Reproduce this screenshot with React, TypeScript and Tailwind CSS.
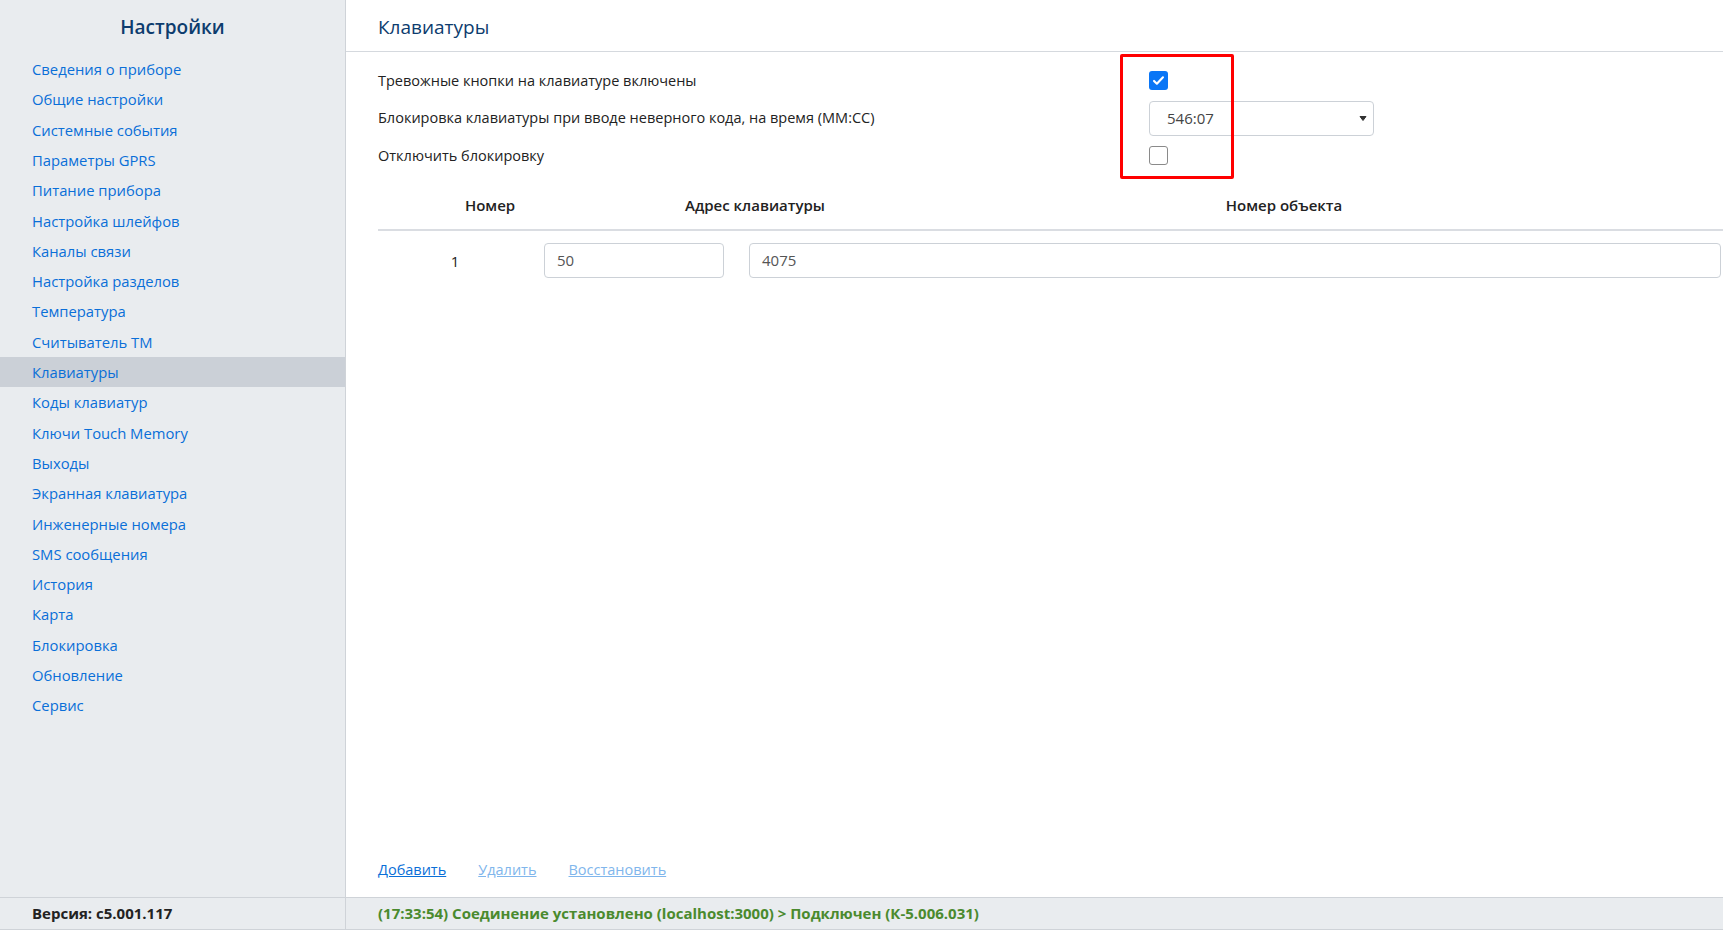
import React from "react";

const menu = [
  "Сведения о приборе",
  "Общие настройки",
  "Системные события",
  "Параметры GPRS",
  "Питание прибора",
  "Настройка шлейфов",
  "Каналы связи",
  "Настройка разделов",
  "Температура",
  "Считыватель TM",
  "Клавиатуры",
  "Коды клавиатур",
  "Ключи Touch Memory",
  "Выходы",
  "Экранная клавиатура",
  "Инженерные номера",
  "SMS сообщения",
  "История",
  "Карта",
  "Блокировка",
  "Обновление",
  "Сервис",
];

function Sidebar() {
  return (
    <aside className="w-[346px] shrink-0 bg-[#e9ecef] border-r border-[#cfd3d8] flex flex-col">
      <div className="h-[54px] flex items-center justify-center text-[19px] font-semibold text-[#0d3c6e]">
        Настройки
      </div>
      <nav className="flex flex-col">
        {menu.map((item) => (
          <a
            key={item}
            href="#"
            className={
              item === "Клавиатуры"
                ? "h-[30.3px] flex items-center pl-[32px] text-[14.8px] text-[#0a6fd8] bg-[#cbd0d7]"
                : "h-[30.3px] flex items-center pl-[32px] text-[14.8px] text-[#0a6fd8]"
            }
          >
            {item}
          </a>
        ))}
      </nav>
    </aside>
  );
}

function Checkbox({ checked }: { checked: boolean }) {
  if (checked) {
    return (
      <span className="w-[19px] h-[19px] rounded-[3px] bg-[#0a76f6] flex items-center justify-center">
        <svg width="13" height="13" viewBox="0 0 16 16">
          <path d="M2.5 8.5l3.5 3.5 7.5-8" fill="none" stroke="#fff" strokeWidth="2.6" strokeLinecap="round" strokeLinejoin="round" />
        </svg>
      </span>
    );
  }
  return <span className="w-[19px] h-[19px] rounded-[3px] border border-[#8a8a8a] bg-white" />;
}

function Main() {
  return (
    <main className="relative flex-1 flex flex-col bg-white">
      <div className="h-[52px] border-b border-[#d5d9de] flex items-center pl-[32px] pt-[3px] text-[19px] text-[#0d3c6e]">
        Клавиатуры
      </div>

      <div className="mt-[10px] pl-[32px] flex flex-col text-[14.5px] text-[#222]">
        <div className="h-[37.5px] flex items-center">
          <div className="w-[771px]">Тревожные кнопки на клавиатуре включены</div>
          <Checkbox checked />
        </div>
        <div className="h-[37.5px] flex items-center">
          <div className="w-[771px]">Блокировка клавиатуры при вводе неверного кода, на время (ММ:СС)</div>
          <div className="w-[225px] h-[35px] border border-[#ccd1d7] rounded-[4px] flex items-center justify-between pl-[17px] pr-[6px] text-[15px] text-[#444]">
            <span>546:07</span>
            <svg width="8" height="7" viewBox="0 0 8 7">
              <path d="M1 1.5h6L4 5.5z" fill="#333" stroke="#333" strokeWidth="1" strokeLinejoin="round" />
            </svg>
          </div>
        </div>
        <div className="h-[37.5px] flex items-center">
          <div className="w-[771px]">Отключить блокировку</div>
          <Checkbox checked={false} />
        </div>
      </div>

      <div className="ml-[32px] mt-[12px] h-[44px] flex items-center pb-[4px] border-b-2 border-[#dadde2] text-[15px] font-semibold text-[#222]">
        <div className="w-[224px] text-center">Номер</div>
        <div className="w-[306px] text-center">Адрес клавиатуры</div>
        <div className="w-[752px] text-center">Номер объекта</div>
      </div>

      <div className="ml-[32px] mr-[2px] mt-[12px] flex items-center text-[15px]">
        <div className="w-[154px] text-center text-[#222] pt-[2px]">1</div>
        <div className="ml-[12px] w-[180px] h-[35px] border border-[#ccd1d7] rounded-[4px] flex items-center pl-[12px] text-[#555]">
          50
        </div>
        <div className="ml-[25px] flex-1 h-[35px] border border-[#ccd1d7] rounded-[4px] flex items-center pl-[12px] text-[#555]">
          4075
        </div>
      </div>

      <div className="mt-auto mb-[15px] pl-[32px] flex items-center gap-[32px] text-[14.5px] h-[24px]">
        <a href="#" className="text-[#0a6fd8] underline">Добавить</a>
        <a href="#" className="text-[#80b6ec] underline">Удалить</a>
        <a href="#" className="text-[#80b6ec] underline">Восстановить</a>
      </div>

      <div className="absolute left-[774px] top-[54px] w-[114px] h-[125px] border-[3px] border-[#ff0000] rounded-[2px]" />
    </main>
  );
}

export default function App() {
  return (
    <div className="h-[930px] w-full flex flex-col font-['Open_Sans','Noto_Sans',sans-serif]">
      <div className="flex flex-1 min-h-0">
        <Sidebar />
        <Main />
      </div>
      <footer className="h-[33px] flex border-t border-b border-[#cfd3d8] bg-[#e9ecef] text-[15px] font-bold">
        <div className="w-[346px] border-r border-[#cfd3d8] flex items-center pl-[32px] text-[#222]">
          Версия: c5.001.117
        </div>
        <div className="flex-1 flex items-center pl-[32px] text-[#4a8a2e]">
          (17:33:54) Соединение установлено (localhost:3000) &gt; Подключен (К-5.006.031)
        </div>
      </footer>
    </div>
  );
}
